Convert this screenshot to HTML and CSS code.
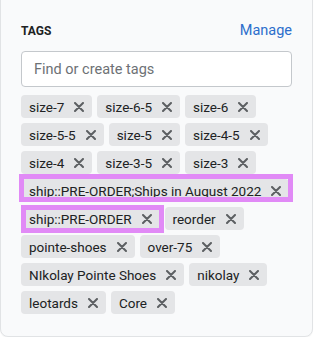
FILE: index.html
```html
<!DOCTYPE html>
<html>
<head>
<meta charset="utf-8">
<link rel="stylesheet" href="styles.css">
</head>
<body>
<div class="card">
  <div class="header">
    <h2 class="title">TAGS</h2>
    <a class="manage">Manage</a>
  </div>
  <div class="input">Find or create tags</div>
  <div class="tags">
    <span class="tag">size-7<svg class="x" viewBox="0 0 10 10"><path d="M1 1 9 9M9 1 1 9"/></svg></span>
    <span class="tag">size-6-5<svg class="x" viewBox="0 0 10 10"><path d="M1 1 9 9M9 1 1 9"/></svg></span>
    <span class="tag">size-6<svg class="x" viewBox="0 0 10 10"><path d="M1 1 9 9M9 1 1 9"/></svg></span>
    <span class="tag">size-5-5<svg class="x" viewBox="0 0 10 10"><path d="M1 1 9 9M9 1 1 9"/></svg></span>
    <span class="tag">size-5<svg class="x" viewBox="0 0 10 10"><path d="M1 1 9 9M9 1 1 9"/></svg></span>
    <span class="tag">size-4-5<svg class="x" viewBox="0 0 10 10"><path d="M1 1 9 9M9 1 1 9"/></svg></span>
    <span class="tag">size-4<svg class="x" viewBox="0 0 10 10"><path d="M1 1 9 9M9 1 1 9"/></svg></span>
    <span class="tag">size-3-5<svg class="x" viewBox="0 0 10 10"><path d="M1 1 9 9M9 1 1 9"/></svg></span>
    <span class="tag">size-3<svg class="x" viewBox="0 0 10 10"><path d="M1 1 9 9M9 1 1 9"/></svg></span>
    <span class="tag mark-a">ship::PRE-ORDER;Ships in August 2022<svg class="x" viewBox="0 0 10 10"><path d="M1 1 9 9M9 1 1 9"/></svg></span>
    <span class="tag mark-b">ship::PRE-ORDER<svg class="x" viewBox="0 0 10 10"><path d="M1 1 9 9M9 1 1 9"/></svg></span>
    <span class="tag">reorder<svg class="x" viewBox="0 0 10 10"><path d="M1 1 9 9M9 1 1 9"/></svg></span>
    <span class="tag">pointe-shoes<svg class="x" viewBox="0 0 10 10"><path d="M1 1 9 9M9 1 1 9"/></svg></span>
    <span class="tag">over-75<svg class="x" viewBox="0 0 10 10"><path d="M1 1 9 9M9 1 1 9"/></svg></span>
    <span class="tag">NIkolay Pointe Shoes<svg class="x" viewBox="0 0 10 10"><path d="M1 1 9 9M9 1 1 9"/></svg></span>
    <span class="tag">nikolay<svg class="x" viewBox="0 0 10 10"><path d="M1 1 9 9M9 1 1 9"/></svg></span>
    <span class="tag">leotards<svg class="x" viewBox="0 0 10 10"><path d="M1 1 9 9M9 1 1 9"/></svg></span>
    <span class="tag">Core<svg class="x" viewBox="0 0 10 10"><path d="M1 1 9 9M9 1 1 9"/></svg></span>
  </div>
</div>
</body>
</html>
```
FILE: styles.css
```css
html, body {
  margin: 0;
  padding: 0;
  background: #ffffff;
}
body {
  font-family: Roboto, "Noto Sans", sans-serif;
  color: #202223;
}
.card {
  box-sizing: border-box;
  width: 313px;
  margin-top: -10px;
  padding: 31px 20px 22px;
  background: #f9fafb;
  border: 1px solid #e1e3e5;
  border-radius: 8px;
  box-shadow: 0 1px 1px rgba(0,0,0,0.04);
}
.header {
  display: flex;
  justify-content: space-between;
  align-items: baseline;
  height: 20px;
}
.title {
  margin: 0;
  font-size: 12px;
  font-weight: 700;
  color: #202223;
}
.manage {
  font-size: 14.5px;
  color: #2c6ecb;
  cursor: pointer;
}
.input {
  box-sizing: border-box;
  margin-top: 9px;
  height: 36px;
  padding: 0 12px;
  display: flex;
  align-items: center;
  background: #ffffff;
  border: 1px solid #c4c8cc;
  border-radius: 4px;
  font-size: 14.5px;
  color: #6d7175;
}
.tags {
  margin-top: 8px;
  display: flex;
  flex-wrap: wrap;
  gap: 5px;
}
.tag {
  position: relative;
  display: inline-flex;
  align-items: center;
  height: 23px;
  padding: 0 8px;
  background: #e4e5e7;
  border-radius: 4px;
  font-size: 13.5px;
  color: #202223;
  white-space: nowrap;
}
.x {
  width: 10px;
  height: 10px;
  margin-left: 10px;
  fill: none;
  stroke: #5c5f62;
  stroke-width: 2;
  stroke-linecap: round;
}
.mark-a::after,
.mark-b::after {
  content: "";
  position: absolute;
  border: 5px solid #e18af6;
  box-sizing: border-box;
}
.mark-a::after {
  left: -2px;
  top: -5px;
  right: -4px;
  bottom: 0;
}
.mark-b::after {
  left: 0;
  top: -2px;
  right: -4px;
  bottom: -3px;
}
```
